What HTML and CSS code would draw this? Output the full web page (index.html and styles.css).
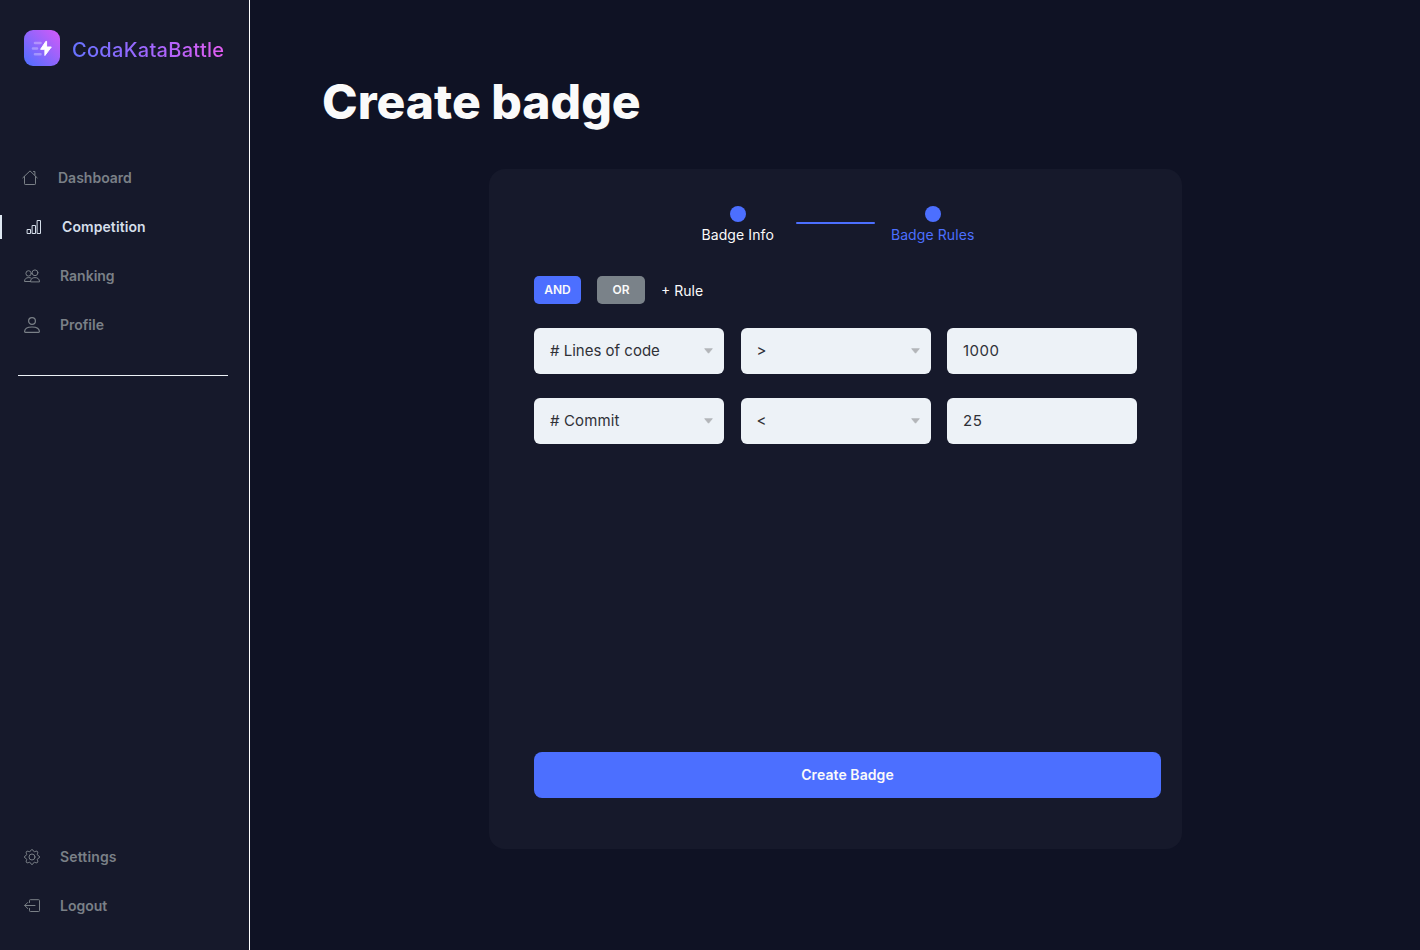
FILE: index.html
```html
<!DOCTYPE html>
<html lang="en">
<head>
<meta charset="utf-8">
<title>CodaKataBattle</title>
<link rel="stylesheet" href="styles.css">
</head>
<body>
<div class="app">
  <aside class="sidebar">
    <div class="brand">
      <svg class="brand-mark" width="36" height="36" viewBox="0 0 36 36">
        <defs><linearGradient id="mark" x1="0" y1="1" x2="1" y2="0"><stop offset="0" stop-color="#4c6fff"/><stop offset="1" stop-color="#d65af8"/></linearGradient></defs>
        <rect width="36" height="36" rx="9" fill="url(#mark)"/>
        <g stroke="#fff" stroke-opacity=".3" stroke-width="2.6" stroke-linecap="round"><path d="M11 13h5.500M9 18.500h4M11 24.300h5.500"/></g>
        <path d="M22 11.200 16.600 19.300h4.300v6.200l6.400-8.500h-4.700v-5.600Z" fill="#fff" stroke="#fff" stroke-width="1" stroke-linejoin="round"/>
      </svg>
      <span class="brand-name">CodaKataBattle</span>
    </div>
    <nav class="nav">
      <a class="item item-home">
        <svg class="icon" width="16" height="16" viewBox="0 0 16 16"><path d="M.8 7.800 8 .9l7.200 6.900M2.500 6.500v7.300q0 .7.700.7h9.600q.7 0 .7-.7V6.500M11.500 1.500h1.400v3.500"/></svg>
        <span>Dashboard</span>
      </a>
      <a class="item item-active">
        <svg class="icon" width="16" height="16" viewBox="0 0 16 16"><path d="M1.500 10.500h3v4h-3zM6.500 6.500h3v8h-3zM11.500 1.500h3v13h-3z"/></svg>
        <span>Competition</span>
      </a>
      <a class="item">
        <svg class="icon" width="16" height="16" viewBox="0 0 16 16"><circle cx="11" cy="4.800" r="2.900"/><path d="M6.500 13.500c0-2.500 1.700-3.900 4.500-3.900s4.500 1.400 4.500 3.900ZM6.500 13.500h-6c0-2.500 1.500-3.900 4.300-3.900 1 0 1.700.2 2.300.5"/><circle cx="4.600" cy="5.400" r="2.700"/></svg>
        <span>Ranking</span>
      </a>
      <a class="item">
        <svg class="icon icon-bold" width="16" height="16" viewBox="0 0 16 16"><circle cx="8" cy="4" r="3.400"/><path d="M.6 14.600c0-2.700 2.300-4.600 7.400-4.600s7.400 1.900 7.400 4.600q0 .8-.8.8H1.400q-.8 0-.8-.8Z"/></svg>
        <span>Profile</span>
      </a>
    </nav>
    <div class="divider"></div>
    <nav class="nav nav-bottom">
      <a class="item item-spaced">
        <svg class="icon" width="16" height="16" viewBox="0 0 16 16"><circle cx="8" cy="8" r="3"/><path d="M6.800 1.300q1.200-1.700 2.400 0l.4 1q.6.700 1.500.3l1-.5q1.800-.2 1.800 1.800l-.5 1q-.4.900.4 1.500l1 .4q1.700 1.200 0 2.400l-1 .4q-.8.600-.4 1.500l.5 1q.2 1.800-1.800 1.800l-1-.5q-.9-.4-1.500.3l-.4 1q-1.200 1.700-2.400 0l-.4-1q-.6-.7-1.500-.3l-1 .5q-1.800.2-1.800-1.800l.5-1q.4-.9-.4-1.500l-1-.4q-1.700-1.200 0-2.400l1-.4q.8-.6.4-1.500l-.5-1q-.2-1.800 1.800-1.800l1 .5q.9.400 1.500-.3Z"/></svg>
        <span>Settings</span>
      </a>
      <a class="item">
        <svg class="icon" width="16" height="16" viewBox="0 0 16 16"><path d="M5.500 4.500V2.500q0-.8.8-.8h8.400q.8 0 .8.800v10.200q0 .8-.8.800H6.300q-.8 0-.8-.8v-2.200M11 7.500H.8M3.700 4.500.7 7.500l3 3"/></svg>
        <span>Logout</span>
      </a>
    </nav>
  </aside>
  <main class="main">
    <h1 class="title">Create badge</h1>
    <section class="card">
      <div class="steps">
        <div class="step"><span class="dot"></span><span>Badge Info</span></div>
        <span class="step-line"></span>
        <div class="step step-current"><span class="dot"></span><span>Badge Rules</span></div>
      </div>
      <div class="actions">
        <button class="chip chip-and">AND</button>
        <button class="chip chip-or">OR</button>
        <span class="add-rule">+ Rule</span>
      </div>
      <div class="rules">
        <div class="field"># Lines of code<svg class="caret" width="9" height="6" viewBox="0 0 9 6"><path d="M.7.7h7.600L4.500 5.200Z"/></svg></div>
        <div class="field">&gt;<svg class="caret" width="9" height="6" viewBox="0 0 9 6"><path d="M.7.7h7.600L4.500 5.200Z"/></svg></div>
        <div class="field field-number">1000</div>
        <div class="field field-commit"># Commit<svg class="caret" width="9" height="6" viewBox="0 0 9 6"><path d="M.7.7h7.600L4.500 5.200Z"/></svg></div>
        <div class="field">&lt;<svg class="caret" width="9" height="6" viewBox="0 0 9 6"><path d="M.7.7h7.600L4.500 5.200Z"/></svg></div>
        <div class="field field-number">25</div>
      </div>
      <button class="submit">Create Badge</button>
    </section>
  </main>
</div>
</body>
</html>
```
FILE: styles.css
```css
* { box-sizing: border-box; }
body { margin: 0; background: #0f1224; font-family: Inter, sans-serif; color: #fafafa; }
.app { display: flex; height: 950px; }
.sidebar { width: 250px; flex: none; display: flex; flex-direction: column; background: #16192b; border-right: 1px solid #fff; padding: 30px 0 20px; }
.brand { display: flex; align-items: center; gap: 12px; height: 36px; padding-left: 24px; }
.brand-mark { flex: none; }
.brand-name { font-size: 20px; line-height: 28px; font-weight: 500; letter-spacing: .3px; padding-top: 3px; white-space: nowrap; color: transparent; background: linear-gradient(90deg, #6672ff 0%, #a666ff 55%, #e25cf0 100%); background-clip: text; -webkit-background-clip: text; }
.nav { display: flex; flex-direction: column; gap: 25px; margin-top: 100px; }
.item { display: flex; align-items: center; gap: 20px; height: 24px; padding-left: 24px; color: #7a8087; font-size: 14px; font-weight: 600; line-height: 24px; }
.item-home { padding-left: 22px; }
.item-active { padding-left: 24px; border-left: 2px solid #dfe8f2; color: #d5deea; letter-spacing: .08px; }
.item-spaced { letter-spacing: .14px; }
.icon { flex: none; fill: none; stroke: currentColor; stroke-width: 1; stroke-linejoin: round; stroke-linecap: round; }
.icon-bold { stroke-width: 1.2; }
.divider { height: 1px; margin: 38px 21px 0 18px; background: #edf2f7; }
.nav-bottom { margin-top: auto; margin-bottom: 12px; }
.main { flex: 1; padding: 72px 72px 0; }
.title { margin: 0; font-size: 48px; line-height: 60px; font-weight: 800; }
.card { display: flex; flex-direction: column; width: 693px; height: 680px; margin: 37px 0 0 167px; padding: 37px 21px 51px 45px; border-radius: 16px; background: #16192b; }
.steps { display: flex; align-items: flex-start; padding-left: 167.500px; }
.step { display: flex; flex-direction: column; align-items: center; gap: 3px; font-size: 14px; line-height: 20px; letter-spacing: .09px; white-space: nowrap; }
.step-current { color: #4c6fff; }
.dot { width: 16px; height: 16px; border-radius: 50%; background: #4c6fff; }
.step-line { width: 79px; height: 2px; margin: 16px 16px 0 22px; background: #4c6fff; border-radius: 1px; }
.actions { display: flex; align-items: center; gap: 16px; margin-top: 31px; height: 28px; }
.chip { height: 28px; border: 0; padding: 0; border-radius: 5px; color: #fafafa; font: 600 12px/28px Inter, sans-serif; }
.chip-and { width: 47px; background: #4c6fff; }
.chip-or { width: 48px; background: #7a8289; }
.add-rule { font-size: 14px; line-height: 20px; padding-top: 1px; }
.rules { display: grid; grid-template-columns: repeat(3, 190px); gap: 24px 16.500px; margin-top: 24px; }
.field { display: flex; align-items: center; justify-content: space-between; height: 46px; padding: 0 11px 2px 16px; border-radius: 6px; background: #edf2f7; color: #303137; font-size: 15px; }
.field-number { letter-spacing: .5px; }
.field-commit { letter-spacing: .12px; }
.caret { margin-top: 2px; fill: #b3b5b9; stroke: #b3b5b9; stroke-width: .8; stroke-linejoin: round; }
.submit { width: 627px; height: 46px; margin-top: auto; border: 0; border-radius: 8px; background: #4c6fff; color: #fafafa; font: 600 14px/20px Inter, sans-serif; letter-spacing: .08px; }
```
